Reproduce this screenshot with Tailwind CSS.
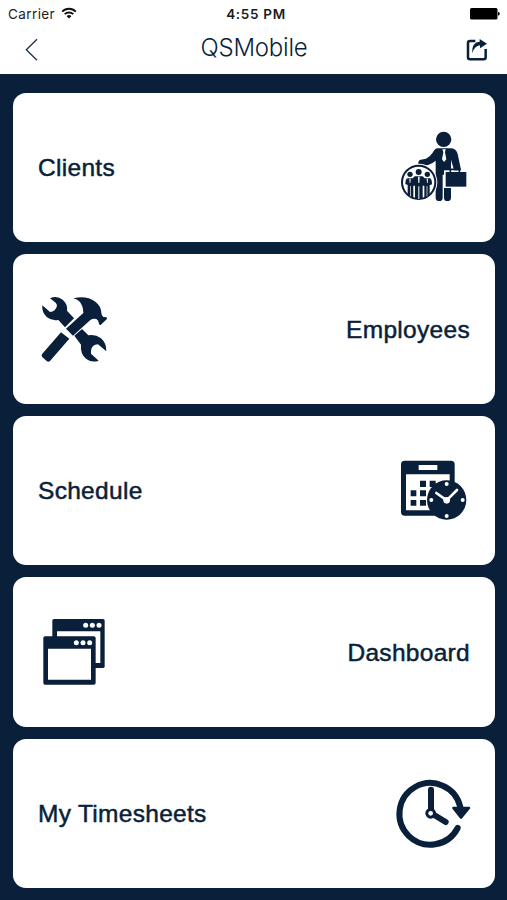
<!DOCTYPE html>
<html lang="en">
<head>
    <meta charset="UTF-8">
    <meta name="viewport" content="width=device-width, initial-scale=1.0">
    <title>QSMobile</title>
    <script src="https://cdn.jsdelivr.net/npm/@tailwindcss/browser@4"></script>
</head>
<body class="bg-[#0a1f3a] text-[#0a1f3a] h-[900px] overflow-hidden font-['Liberation_Sans',sans-serif]">

<header class="bg-white h-[74px]">
    <!-- status bar -->
    <div class="grid grid-cols-3 items-center h-7 pl-2 pr-[7px] font-['Inter',sans-serif] text-[13px] text-[#1c1c1c]">
        <div class="flex items-center gap-[6px]">
            <span class="text-[13.5px] tracking-[0.4px]">Carrier</span>
            <svg class="w-4 h-3 -mt-0.5" viewBox="0 0 16 12" fill="none" stroke="#111" stroke-width="1.9">
                <path d="M1.2 4.6a9.6 9.6 0 0 1 13.6 0"/>
                <path d="M3.7 7.2a6.1 6.1 0 0 1 8.6 0"/>
                <path d="M8 11.6 5.6 9.2a3.4 3.4 0 0 1 4.8 0z" fill="#111" stroke="none"/>
            </svg>
        </div>
        <div class="text-center font-semibold text-[13.5px] tracking-[0.7px] pl-1">4:55 PM</div>
        <div class="flex justify-end">
            <svg class="w-[30px] h-3" viewBox="0 0 30 12">
                <rect x="0" y="0" width="27.5" height="11.5" rx="1.5" fill="#000"/>
                <path d="M28 3.8q1.8.6 1.8 2t-1.8 2z" fill="#000"/>
            </svg>
        </div>
    </div>
    <!-- nav bar -->
    <div class="flex items-center justify-between h-11 pl-[25px] pr-[18px]">
        <svg class="w-[23px] h-6" viewBox="0 0 23 24" fill="none" stroke="#1d3049" stroke-width="1.3">
            <path d="M12 1.2 1.3 11.7 12 22.2"/>
        </svg>
        <h1 class="text-[24px] leading-8 font-light font-['Inter',sans-serif] -mt-1 mr-[5px] tracking-[-0.2px]">QSMobile</h1>
        <svg class="w-6 h-6" viewBox="0 0 72 72" fill="none" stroke="#0a1f3a">
            <path d="M31 9H15q-6 0-6 6v43q0 6 6 6h41q6 0 6-6V33" stroke-width="7.5"/>
            <path d="M21 46Q20 12 44 11V3L66 17 45 31v-9Q29 24 21 46z" fill="#0a1f3a" stroke="none"/>
        </svg>
    </div>
</header>

<main class="flex flex-col gap-3 px-[13px] pr-3 pt-[18.5px] text-[24.5px] tracking-[0.3px] [-webkit-text-stroke:0.5px_#0a1f3a]">
    <a class="flex items-center justify-between shrink-0 h-[149.5px] rounded-[13px] bg-white pl-[25px] pr-[15px]">
        <span class="pt-[3px]">Clients</span>
        <svg class="w-[90px] h-[90px]" viewBox="0 1 270 270" fill="#0a1f3a">
            <circle cx="161" cy="53" r="23"/>
            <path d="M143 80h38q18 0 22 17l11 52h-21l-10-35v114q0 10-11 10-10 0-10-10v-69h-4v69q0 10-10 10-11 0-11-10V117q-10 9-23 13-12 4-26 4-7-10 1-19l19-4q12-6 20-18 7-13 15-13z"/>
            <path d="M157 83h10l-2 9 4 21-7 8-6-8 4-21z" fill="#fff"/>
            <circle cx="86" cy="182" r="56" fill="#fff"/>
            <circle cx="86" cy="182" r="50" fill="none" stroke="#0a1f3a" stroke-width="6"/>
            <circle cx="86" cy="151" r="9"/>
            <circle cx="60" cy="158" r="8"/>
            <circle cx="112" cy="158" r="8"/>
            <path d="M74 164h24l6 6h16q6 2 6 18l-7 3v29l-16 8V192h-5v39H75v-39h-5v36l-17-9v-29l-7-3q0-15 7-17h15z"/>
            <path d="M84 165h5l-1 19h-3zM58 171h4l-1 13h-2zM110 171h4l-1 13h-2zM85 194h3v38h-3zM60 193h2v31h-2zM110 193h2v31h-2z" fill="#fff"/>
            <path d="M162 146h71v53h-71z" fill="#fff"/>
            <path d="M167 151h62v44h-62z"/>
            <path d="M181 151v-8h27v8" fill="none" stroke="#0a1f3a" stroke-width="5"/>
        </svg>
    </a>
    <a class="flex items-center justify-between shrink-0 h-[149.5px] rounded-[13px] bg-white pl-[17px] pr-[25px]">
        <svg class="w-[90px] h-[90px]" viewBox="0 -4 270 270" fill="#0a1f3a">
            <path d="M60 39q21-9 38 4 16 14 13 33l21 23-27 27-20-22q-19 4-35-9-15-14-13-35l23 20q17-1 21-19-1-6-4-9z"/>
            <path d="M133 151l23-20 19 19q21-4 38 9 17 15 16 39l-25-21q-19 1-21 19v9l23 21q-20 7-37-5-19-14-16-43z"/>
            <path d="M93 141l25 19-58 67q-5 4-10 0l-14-13q-3-4 1-9z"/>
            <path d="M130 39q38-10 66 10 17 13 18 33 0 8 6 13l9 1q4 2 1 6l-18 17q-4 1-5-4-1-10-8-14-9-3-18 3l-52 47-21-21 52-47q0-23-13-36-8-6-17-8z"/>
        </svg>
        <span class="pt-[3px]">Employees</span>
    </a>
    <a class="flex items-center justify-between shrink-0 h-[149.5px] rounded-[13px] bg-white pl-[25px] pr-[15px]">
        <span class="pt-[3px]">Schedule</span>
        <svg class="w-[90px] h-[90px]" viewBox="0 0 270 270" fill="#0a1f3a">
            <rect x="33" y="47" width="161" height="165" rx="11"/>
            <path d="M86 60h56v15H86zM48 88h131v108H48z" fill="#fff"/>
            <path d="M90 107h18v19H90zM119 107h18v19h-18zM62 136h17v18H62zM90 136h18v18H90zM119 136h18v18h-18zM62 165h17v17H62zM90 165h18v17H90z"/>
            <circle cx="170" cy="165" r="59"/>
            <g fill="#fff">
                <circle cx="170" cy="117" r="6"/>
                <circle cx="218" cy="165" r="6"/>
                <circle cx="170" cy="213" r="6"/>
                <circle cx="124" cy="165" r="6"/>
                <circle cx="170" cy="166" r="10"/>
            </g>
            <path d="M139 144l31 22 31-31" fill="none" stroke="#fff" stroke-width="8" stroke-linecap="round"/>
        </svg>
    </a>
    <a class="flex items-center justify-between shrink-0 h-[149.5px] rounded-[13px] bg-white pl-[17px] pr-[25px]">
        <svg class="w-[90px] h-[90px]" viewBox="0 5 270 270" fill="#0a1f3a">
            <rect x="67" y="41" width="157" height="147" rx="5"/>
            <path d="M81 78h130v95h-24V97H81z" fill="#fff"/>
            <path d="M45 93h146q6 0 6 6v133q0 6-6 6H45q-5 0-5-6V99q0-6 5-6z"/>
            <path d="M54 130h129v93H54z" fill="#fff"/>
            <g fill="#fff">
                <circle cx="167" cy="60" r="7.5"/>
                <circle cx="187" cy="60" r="7.5"/>
                <circle cx="207" cy="60" r="7.5"/>
                <circle cx="139" cy="112" r="7.5"/>
                <circle cx="159" cy="112" r="7.5"/>
                <circle cx="179" cy="112" r="7.5"/>
            </g>
        </svg>
        <span class="pt-[3px]">Dashboard</span>
    </a>
    <a class="flex items-center justify-between shrink-0 h-[149.5px] rounded-[13px] bg-white pl-[25px] pr-[15px]">
        <span class="pt-[3px]">My Timesheets</span>
        <svg class="w-[90px] h-[90px]" viewBox="0 -5 270 270" fill="none" stroke="#0a1f3a" stroke-linecap="round">
            <path d="M203 175A92.5 92.5 0 1 1 211 112" stroke-width="18"/>
            <path d="M190 115h47l-24 29z" fill="#0a1f3a" stroke-width="7" stroke-linejoin="round"/>
            <path d="M123 60v70l44 27" stroke-width="18" stroke-linejoin="round"/>
            <circle cx="122" cy="131" r="16" fill="#0a1f3a" stroke="none"/>
            <circle cx="122" cy="131" r="7" fill="#fff" stroke="none"/>
        </svg>
    </a>
</main>

</body>
</html>
